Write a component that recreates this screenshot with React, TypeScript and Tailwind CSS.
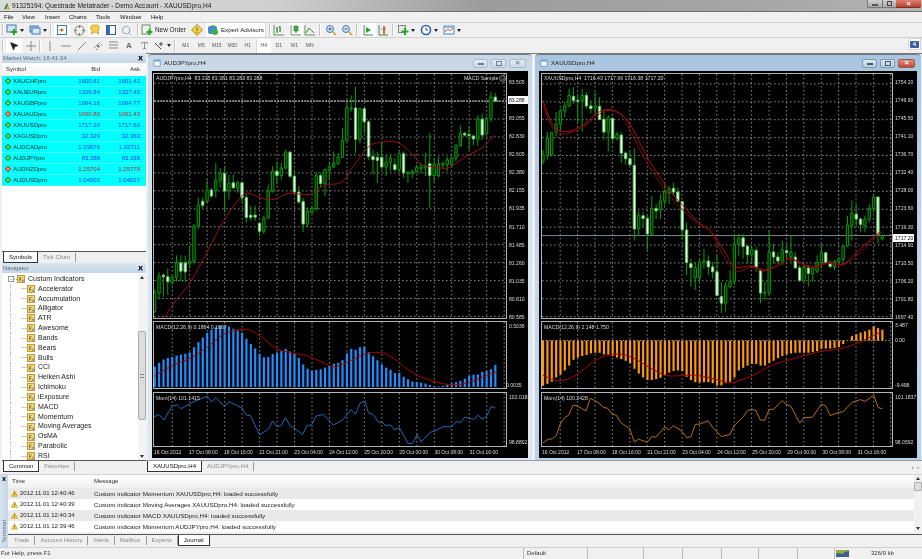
import type { ReactNode } from "react";
import { Crosshair, MousePointer2, Search, Type } from "lucide-react";

type Candle = [number, number, number, number, number];
type Pt = [number, number];

const audCandles: Candle[] = [
  [705,775,712,770,0],[650,730,663,715,0],[655,725,660,665,1],[640,720,665,680,1],[660,690,668,682,0],[600,680,623,668,0],[600,680,623,648,1],[600,680,623,650,1],[570,640,617,625,0],[505,625,512,618,0],
  [425,520,448,512,0],[425,460,436,448,1],[370,440,403,436,0],[395,425,402,420,1],[320,425,372,403,0],[335,395,352,372,0],[330,470,352,405,1],[355,430,380,405,0],[355,400,380,395,1],[375,410,380,397,0],
  [375,440,380,425,1],[415,500,425,485,1],[450,495,478,485,1],[450,495,478,484,1],[500,540,503,527,1],[480,535,487,527,0],[385,490,405,487,0],[330,410,345,405,0],[315,385,345,358,1],[320,370,335,358,0],
  [280,340,287,335,0],[285,365,287,360,1],[340,415,360,408,1],[390,445,408,438,1],[425,530,437,505,1],[455,515,467,505,0],[450,470,458,470,0],[348,465,358,458,0],[350,395,358,382,1],[340,420,340,382,0],
  [315,370,332,342,0],[285,335,320,332,0],[290,325,303,322,0],[215,305,252,303,0],[140,255,153,253,0],[115,165,153,155,0],[88,290,153,248,1],[155,260,155,248,0],[155,230,155,195,1],[190,310,195,300,1],
  [280,355,300,310,1],[285,380,303,312,1],[255,340,303,332,1],[295,360,318,332,0],[295,345,305,318,0],[305,345,325,340,1],[285,345,292,340,0],[285,365,292,350,1],[345,380,348,352,0],[340,365,345,352,0],
  [325,350,333,345,0],[320,350,332,338,0],[290,360,330,335,0],[228,455,322,358,1],[305,380,325,358,0],[300,365,322,358,0],[315,335,322,325,0],[300,345,310,325,0],[300,335,305,325,0],[262,315,268,305,0],
  [205,270,230,268,0],[225,240,230,235,1],[210,280,233,237,1],[235,265,238,247,1],[175,268,187,247,0],[170,250,187,235,1],[180,235,185,232,0],[103,195,120,185,0],[108,135,120,132,1],
];

const xauCandles: Candle[] = [
  [280,325,295,315,0],[225,310,245,298,0],[225,300,228,295,0],[165,240,202,225,0],[155,220,162,202,0],[135,180,147,162,0],[95,150,115,147,0],[90,140,118,130,1],[115,200,130,133,1],[95,225,115,130,0],
  [105,155,115,147,1],[130,170,147,155,1],[105,175,147,155,0],[120,185,148,188,1],[160,250,187,226,1],[175,285,183,226,0],[180,260,185,245,1],[225,250,233,246,0],[225,320,235,290,1],[285,325,290,307,1],
  [285,330,307,325,1],[275,555,327,520,1],[465,540,478,520,0],[470,515,480,488,1],[475,590,488,535,1],[420,540,458,535,0],[445,490,458,465,1],[415,490,435,463,0],[385,450,407,435,0],[390,445,397,410,0],
  [380,420,397,408,1],[395,440,408,435,1],[435,550,437,522,1],[500,660,523,622,1],[610,695,625,637,1],[620,705,637,668,0],[610,680,620,668,0],[580,640,617,620,0],[600,660,617,635,1],[620,670,635,650,1],
  [600,725,650,722,1],[680,775,725,745,1],[680,770,693,745,0],[645,700,680,695,0],[535,690,567,680,0],[535,600,548,567,0],[535,610,547,573,1],[570,625,572,598,1],[575,625,583,597,0],[575,650,585,635,1],
  [640,745,645,714,1],[680,735,712,714,0],[525,720,590,714,0],[565,625,590,605,1],[590,625,605,617,1],[555,630,583,620,0],[565,610,586,592,1],[540,620,590,605,0],[590,640,605,638,1],[630,680,638,676,1],
  [630,680,636,676,0],[630,695,638,655,1],[635,680,640,655,0],[600,655,622,648,0],[565,640,592,622,0],[590,625,592,622,1],[615,640,625,634,1],[615,645,618,634,0],[605,625,610,620,0],[570,620,572,612,0],
  [480,575,508,572,0],[433,555,472,510,0],[445,510,475,490,1],[485,530,490,506,1],[480,530,490,510,0],[445,500,458,490,0],[420,470,423,458,0],[423,565,423,538,1],[535,555,540,550,0],
];

const audMacd = [152,140,130,125,122,118,115,112,108,92,76,62,47,38,30,27,26,28,35,40,48,66,82,96,112,123,122,113,108,104,97,105,112,125,145,158,165,162,160,155,150,143,140,132,111,97,100,92,90,107,120,132,145,155,162,172,171,183,191,198,199,202,204,209,212,213,212,208,204,200,196,189,180,177,176,168,166,160,147];
const xauMacd = [213,207,200,187,178,165,150,132,125,120,117,112,110,110,115,118,120,125,130,135,143,160,175,187,195,195,192,188,180,172,167,165,167,185,195,202,203,202,202,205,212,212,205,200,187,165,157,150,145,145,150,150,142,135,127,120,115,112,110,110,110,110,108,105,98,97,97,95,92,83,72,58,52,47,43,38,27,33,38];

const audMa: Pt[] = [[40,790],[70,745],[120,680],[170,590],[220,495],[270,425],[295,412],[345,430],[380,428],[415,412],[480,415],[520,388],[575,378],[610,330],[655,272],[690,258],[745,258],[790,295],[815,325],[860,332],[895,335],[950,300],[1000,272],[1035,235]];
const xauMaA: Pt[] = [[20,130],[50,205],[90,225],[140,205],[190,165],[225,158],[260,175],[285,205],[340,310],[400,400],[440,445],[490,500],[530,530],[570,590],[600,635],[650,632],[690,645],[740,625],[770,610],[830,635],[880,622],[930,625],[980,580],[1030,535],[1045,530]];
const xauMaB: Pt[] = [[20,145],[50,215],[85,232],[140,212],[190,172],[225,160],[260,178],[280,215],[335,320],[395,410],[440,460],[490,505],[525,525],[565,600],[605,648],[650,636],[690,648],[740,625],[770,612],[830,638],[880,625],[930,628],[980,590],[1030,540],[1045,530]];
const audSignal: Pt[] = [[10,182],[60,152],[120,125],[170,92],[220,52],[270,37],[300,40],[340,65],[380,97],[430,110],[470,118],[510,135],[550,152],[590,140],[640,115],[690,108],[730,125],[790,172],[850,197],[910,208],[960,200],[1040,168]];
const xauSignal: Pt[] = [[20,180],[55,195],[85,195],[120,180],[170,140],[210,118],[260,115],[300,130],[340,155],[390,180],[430,182],[480,180],[530,190],[580,203],[610,198],[660,178],[710,150],[780,128],[850,108],[920,97],[970,80],[1040,45]];
const audMom: Pt[] = [[10,302],[25,295],[40,312],[65,268],[80,265],[92,277],[130,255],[170,238],[183,255],[197,243],[222,270],[237,255],[275,275],[288,297],[300,298],[328,358],[355,340],[367,315],[380,332],[393,330],[406,304],[420,330],[435,340],[458,357],[470,330],[485,327],[498,300],[520,295],[550,328],[578,312],[603,280],[617,294],[630,260],[645,253],[656,290],[670,295],[685,318],[697,320],[710,330],[722,327],[735,343],[748,335],[775,385],[788,385],[802,358],[815,380],[842,350],[855,347],[880,333],[907,333],[920,317],[933,320],[946,303],[972,310],[985,297],[999,310],[1012,300],[1025,270],[1038,275]];
const xauMom: Pt[] = [[20,385],[35,374],[48,372],[60,362],[72,325],[85,305],[98,296],[111,265],[124,267],[150,283],[163,243],[176,250],[189,258],[203,272],[216,275],[229,293],[242,297],[255,320],[282,340],[296,382],[309,373],[335,383],[350,365],[361,367],[388,335],[401,343],[414,330],[440,348],[454,368],[467,366],[480,326],[493,325],[519,315],[533,335],[559,365],[585,358],[598,330],[624,303],[638,283],[651,277],[664,283],[677,312],[690,313],[704,278],[717,278],[743,250],[756,263],[769,268],[796,322],[809,305],[835,303],[862,261],[875,268],[888,298],[914,288],[928,285],[954,256],[980,247],[993,253],[1020,233],[1033,272],[1046,277]];

const dates = ["16 Oct 2012", "17 Oct 08:00", "18 Oct 16:00", "21 Oct 21:00", "23 Oct 04:00", "24 Oct 12:00", "25 Oct 20:00", "29 Oct 00:00", "30 Oct 08:00", "31 Oct 16:00"];

const quotes = [
  ["XAUCHFpro", "1600.81", "1601.42", 0],
  ["XAUEURpro", "1326.84", "1327.45", 0],
  ["XAUGBPpro", "1064.16", "1064.77", 0],
  ["XAUAUDpro", "1650.80", "1651.43", 1],
  ["XAUUSDpro", "1717.20", "1717.60", 0],
  ["XAGUSDpro", "32.329", "32.363", 0],
  ["AUDCADpro", "1.03676", "1.03711", 0],
  ["AUDJPYpro", "83.288", "83.338", 0],
  ["AUDNZDpro", "1.25704", "1.25778", 1],
  ["AUDUSDpro", "1.04002", "1.04027", 0],
] as const;

const indicators = ["Accelerator", "Accumulation", "Alligator", "ATR", "Awesome", "Bands", "Bears", "Bulls", "CCI", "Heiken Ashi", "Ichimoku", "iExposure", "MACD", "Momentum", "Moving Averages", "OsMA", "Parabolic", "RSI"];

const journal = [
  ["2012.11.01 12:40:46", "Custom indicator Momentum XAUUSDpro,H4: loaded successfully"],
  ["2012.11.01 12:40:39", "Custom indicator Moving Averages XAUUSDpro,H4: loaded successfully"],
  ["2012.11.01 12:40:34", "Custom indicator MACD XAUUSDpro,H4: loaded successfully"],
  ["2012.11.01 12:39:46", "Custom indicator Momentum AUDJPYpro,H4: loaded successfully"],
];

// catmull-rom through the sampled points, so the averages don't look like polylines
const smooth = (pts: Pt[]) => {
  let d = `M${pts[0][0]} ${pts[0][1]}`;
  for (let i = 0; i < pts.length - 1; i++) {
    const p0 = pts[Math.max(i - 1, 0)];
    const p1 = pts[i];
    const p2 = pts[i + 1];
    const p3 = pts[Math.min(i + 2, pts.length - 1)];
    d += ` C${p1[0] + (p2[0] - p0[0]) / 6} ${p1[1] + (p2[1] - p0[1]) / 6} ${p2[0] - (p3[0] - p1[0]) / 6} ${p2[1] - (p3[1] - p1[1]) / 6} ${p2[0]} ${p2[1]}`;
  }
  return d;
};

const Curve = ({ pts, color, straight }: { pts: Pt[]; color: string; straight?: boolean }) => (
  <path
    d={straight ? "M" + pts.map((p) => p.join(" ")).join(" L") : smooth(pts)}
    fill="none"
    stroke={color}
    strokeWidth={1}
    vectorEffect="non-scaling-stroke"
  />
);

const Grid = ({ x0, ys, top, bottom, left, right }: { x0: number; ys: number[]; top: number; bottom: number; left: number; right: number }) => (
  <g stroke="#8c8c8c" strokeWidth={1} strokeDasharray="1.5 2.5">
    {Array.from({ length: 20 }, (_, i) => (
      <line key={i} x1={x0 + i * 52.6} x2={x0 + i * 52.6} y1={top} y2={bottom} vectorEffect="non-scaling-stroke" />
    ))}
    {ys.map((y) => (
      <line key={y} x1={left} x2={right} y1={y} y2={y} vectorEffect="non-scaling-stroke" />
    ))}
  </g>
);

const Candles = ({ data, x0 }: { data: Candle[]; x0: number }) => (
  <g>
    {data.map(([hi, lo, top, bot, white], i) => {
      const x = x0 + i * 13.15;
      return (
        <g key={i}>
          <line x1={x} x2={x} y1={hi} y2={lo} stroke="#00a000" strokeWidth={1} vectorEffect="non-scaling-stroke" />
          <rect
            x={x - 3.5}
            y={top}
            width={7}
            height={Math.max(bot - top, 3)}
            fill={white ? "#ffffff" : "#001800"}
            stroke={white ? "#58c858" : "#00a000"}
            strokeWidth={1}
            vectorEffect="non-scaling-stroke"
          />
        </g>
      );
    })}
  </g>
);

const Plot = ({ viewBox, className, children }: { viewBox: string; className: string; children: ReactNode }) => (
  <svg viewBox={viewBox} preserveAspectRatio="none" className={`block shrink-0 border border-[#b4b4b4] bg-black ${className}`}>
    {children}
  </svg>
);

const Axis = ({ children, className = "" }: { children: ReactNode; className?: string }) => (
  <div className={`flex flex-col pl-[2px] text-[5.1px] leading-[8px] text-[#dcdcdc] whitespace-nowrap ${className}`}>{children}</div>
);

const IndicatorText = ({ children }: { children: ReactNode }) => (
  <span className="absolute left-[3px] top-[2px] text-[5.2px] leading-[8px] text-[#d8d8d8] whitespace-nowrap">{children}</span>
);

const WinBtn = ({ kind, active }: { kind: "min" | "max" | "close"; active?: boolean }) => (
  <span
    className={`flex h-[9px] items-center justify-center rounded-[2px] border ${
      kind === "close" ? "w-[17px]" : "w-[15px]"
    } ${
      kind === "close" && active
        ? "border-[#9a5a50] bg-[linear-gradient(#e09080,#c04a38)] text-white"
        : active
          ? "border-[#7f97ad] bg-[linear-gradient(#dce8f2,#b6cbdd)] text-[#44596b]"
          : "border-[#a9bccd] bg-[linear-gradient(#e2ebf3,#c9d9e7)] text-[#6f8293]"
    }`}
  >
    {kind === "min" && <span className="mt-[2px] h-[2px] w-[6px] border border-current" />}
    {kind === "max" && <span className="h-[5px] w-[6px] border border-current" />}
    {kind === "close" && <span className="text-[8px] leading-[8px] font-bold">×</span>}
  </span>
);

const ChartWindow = ({ title, active, className, children }: { title: string; active?: boolean; className: string; children: ReactNode }) => (
  <div
    className={`flex flex-col rounded-t-[4px] border-t border-[#6d7f90] px-[4px] pb-[3px] ${
      active ? "bg-[linear-gradient(#a9c5e0,#c2d8ec_60%,#b6d3ec)]" : "bg-[linear-gradient(#c9d8e7,#d9e5f0_60%,#dde7f1)]"
    } ${className}`}
  >
    <div className="flex h-[16px] shrink-0 items-center">
      <svg viewBox="0 0 10 10" className="ml-[1px] h-[8px] w-[8px]">
        <rect x="1" y="1" width="8" height="8" rx="1" fill="#fff" stroke="#5b8fc4" />
        <rect x="1" y="1" width="8" height="2.5" fill="#7fb0dd" />
      </svg>
      <span className="ml-[3px] text-[6.1px] text-[#222]">{title}</span>
      <div className="ml-auto flex gap-[3px] pr-[2px]">
        <WinBtn kind="min" active={active} />
        <WinBtn kind="max" active={active} />
        <WinBtn kind="close" active={active} />
      </div>
    </div>
    <div className="flex-1 bg-black">{children}</div>
  </div>
);

const DateRow = ({ left }: { left: string }) => (
  <div className={`flex h-[11px] items-center text-[5px] text-[#dcdcdc] whitespace-nowrap ${left}`}>
    {dates.map((d) => (
      <span key={d} className="w-[35.05px] shrink-0">
        {d}
      </span>
    ))}
  </div>
);

const Ic = ({ children, className = "" }: { children: ReactNode; className?: string }) => (
  <svg viewBox="0 0 12 12" className={`h-[12px] w-[12px] shrink-0 ${className}`}>
    {children}
  </svg>
);

const Caret = () => (
  <svg viewBox="0 0 4 3" className="ml-[2px] h-[3px] w-[4px] shrink-0">
    <path d="M0 0h4L2 3z" fill="#222" />
  </svg>
);

const Sep = ({ className = "" }: { className?: string }) => <span className={`h-[12px] w-[2px] shrink-0 border-r border-l border-r-white border-l-[#c4c4c4] ${className}`} />;

const DocPlus = () => (
  <Ic>
    <rect x="1" y="1" width="9" height="7" fill="#cfe2f5" stroke="#3f78b5" />
    <path d="M8 5v6M5 8h6" stroke="#27a327" strokeWidth="2" />
  </Ic>
);

const CandleIcon = ({ mode }: { mode: number }) => (
  <Ic>
    <path d="M1 1v10h10" fill="none" stroke="#4f6f3f" strokeWidth=".8" />
    {mode === 0 && <path d="M4 3v6M7 2v6M4 4H3M4 7h1M7 3H6M7 6h1" stroke="#1f7a1f" fill="none" />}
    {mode === 1 && (
      <>
        <path d="M6 1v8" stroke="#2e8b2e" />
        <rect x="4" y="2.5" width="4" height="4.5" fill="#3fae3f" stroke="#1f6a1f" strokeWidth=".6" />
      </>
    )}
    {mode === 2 && <path d="M2 9l3-5 2 2 3 3" fill="none" stroke="#2e8b2e" />}
  </Ic>
);

const Tf = ({ label, on }: { label: string; on?: boolean }) => (
  <span className={`flex h-[14px] w-[15.5px] items-center justify-center text-[5px] text-[#555] ${on ? "bg-white border-l border-[#d8d8d8]" : ""}`}>{label}</span>
);

const TabRow = ({ items, active, className = "" }: { items: string[]; active: string; className?: string }) => (
  <div className={`flex items-start text-[6px] ${className}`}>
    {items.map((t) => (
      <span
        key={t}
        className={
          t === active
            ? "flex h-[11px] items-center border-x border-b border-[#333] bg-white px-[5px] text-[#111]"
            : "flex h-[9px] items-center border-r border-[#999] px-[5px] text-[#8a8a8a] mt-[1px]"
        }
      >
        {t}
      </span>
    ))}
  </div>
);

const PanelHead = ({ title }: { title: string }) => (
  <div className="flex h-[10px] items-center bg-[linear-gradient(#dbe6f1,#c5d6e7)] pl-[1px] pr-[3px] text-[6px] text-[#5d6a78]">
    {title}
    <span className="ml-auto h-[5px] w-[5px] bg-[#222] [clip-path:polygon(0_0,30%_0,50%_30%,70%_0,100%_0,70%_50%,100%_100%,70%_100%,50%_70%,30%_100%,0_100%,30%_50%)]" />
  </div>
);

const Diamond = ({ up }: { up: boolean }) => (
  <svg viewBox="0 0 8 8" className="ml-[3px] h-[6px] w-[6px] shrink-0">
    <path d="M4 0l4 4-4 4-4-4z" fill={up ? "#2ba82b" : "#e0562a"} stroke={up ? "#176617" : "#8f3316"} strokeWidth=".6" />
    <circle cx="4" cy="4" r="1.2" fill={up ? "#c8f090" : "#ffc090"} />
  </svg>
);

const FolderIcon = ({ className = "" }: { className?: string }) => (
  <svg viewBox="0 0 9 9" className={`h-[8px] w-[8px] shrink-0 ${className}`}>
    <rect x=".5" y=".5" width="8" height="8" fill="#f6d76f" stroke="#b9922c" />
    <path d="M3 7V3h2M3 5h1.5" fill="none" stroke="#6d6340" strokeWidth=".9" />
    <circle cx="6.5" cy="6.5" r="1.4" fill="#9b9b9b" />
  </svg>
);

const Warn = () => (
  <svg viewBox="0 0 10 9" className="h-[7px] w-[7px] shrink-0">
    <path d="M5 .5l4.5 8h-9z" fill="#f3cf3a" stroke="#a78a16" strokeWidth=".7" />
    <path d="M5 3v3M5 7v.6" stroke="#5a4a08" strokeWidth=".9" />
  </svg>
);

const ScrollArrow = ({ up }: { up?: boolean }) => (
  <span className="flex h-[7px] w-full items-center justify-center">
    <span className={`h-0 w-0 border-x-[2px] border-x-transparent ${up ? "border-b-[3px] border-b-[#333]" : "border-t-[3px] border-t-[#333]"}`} />
  </span>
);

export default function App() {
  return (
    <div className="flex h-[559px] w-[922px] flex-col overflow-hidden bg-[#f0f0f0] font-['Liberation_Sans',sans-serif] text-[6px] text-[#222] blur-[0.3px]">
      {/* title bar */}
      <div className="flex h-[12px] shrink-0 items-center border-b border-[#6e6e6e] bg-[linear-gradient(90deg,#dadada,#cfcfcf_30%,#9c9c9c_52%,#a5a5a5_80%,#b4b4b4)] pl-[3px]">
        <svg viewBox="0 0 10 10" className="h-[8px] w-[8px]">
          <path d="M1 9L5 1l1.5 3L4 9z" fill="#4a8f2a" />
          <path d="M5 9l2-3 2 3z" fill="#c9a02a" />
        </svg>
        <span className="ml-[1px] text-[6.6px] text-[#1a1a1a]">91325194: Questrade Metatrader - Demo Account - XAUUSDpro,H4</span>
        <div className="ml-auto flex items-start self-start">
          <span className="flex h-[8px] w-[15px] items-center justify-center rounded-bl-[2px] border-b border-l border-[#777] bg-[linear-gradient(#cfcfcf,#aaa)]">
            <span className="mt-[2px] h-[2px] w-[6px] border border-[#555] bg-white" />
          </span>
          <span className="flex h-[8px] w-[14px] items-center justify-center border-b border-l border-[#777] bg-[linear-gradient(#cfcfcf,#aaa)]">
            <span className="h-[5px] w-[5px] border border-[#444]" />
          </span>
          <span className="mr-[1px] flex h-[8px] w-[25px] items-center justify-center rounded-br-[2px] border-b border-[#7a3028] bg-[linear-gradient(#e08070,#b8402e)] text-[8px] leading-[7px] font-bold text-white">×</span>
        </div>
      </div>

      {/* menu */}
      <div className="flex h-[11px] shrink-0 items-center border-b border-[#d0d0d0] pl-[4px] text-[6px] text-[#111]">
        <span className="w-[18px]">File</span>
        <span className="w-[23px]">View</span>
        <span className="w-[24px]">Insert</span>
        <span className="w-[27px]">Charts</span>
        <span className="w-[24px]">Tools</span>
        <span className="w-[31px]">Window</span>
        <span>Help</span>
      </div>

      {/* standard toolbar */}
      <div className="flex h-[15px] shrink-0 items-center border-b border-[#d0d0d0] pl-[2px]">
        <Sep />
        <span className="ml-[2px]"><DocPlus /></span>
        <Caret />
        <span className="ml-[5px] flex items-center">
          <Ic>
            <rect x="1" y="2" width="8" height="6" fill="#b5d0ee" stroke="#3f78b5" />
            <rect x="3" y="4" width="8" height="6" fill="#d7e7f7" stroke="#3f78b5" />
          </Ic>
          <Caret />
        </span>
        <Sep className="ml-[3px]" />
        <span className="ml-[2px] flex h-[14px] w-[16px] items-center justify-center bg-white">
          <Ic>
            <rect x="1.5" y="1.5" width="9" height="9" fill="#fff" stroke="#3f78b5" />
            <path d="M5 4l3 2-3 2z" fill="#e0562a" />
            <path d="M3 6h2" stroke="#2ba82b" />
          </Ic>
        </span>
        <span className="ml-[3px] flex w-[12px] justify-center">
          <Crosshair className="h-[11px] w-[11px] text-[#6d6d6d]" strokeWidth={2} />
        </span>
        <span className="ml-[3px] flex h-[14px] w-[14px] items-center justify-center bg-white">
          <Ic>
            <path d="M3 1h6l2 3-2 2 1 4-4-2-4 2 1-4-2-2z" fill="#f4cf4f" stroke="#b9922c" strokeWidth=".7" />
          </Ic>
        </span>
        <span className="ml-[1px] flex h-[14px] w-[15px] items-center justify-center bg-white">
          <Ic>
            <rect x="1.5" y="1.5" width="9" height="9" fill="#fff" stroke="#35598c" />
            <rect x="2" y="2" width="3" height="8" fill="#2f6fbf" />
          </Ic>
        </span>
        <span className="ml-[1px] flex h-[14px] w-[15px] items-center justify-center">
          <Search className="h-[11px] w-[11px] text-[#7a8ea6]" strokeWidth={1.6} />
        </span>
        <Sep className="ml-[3px]" />
        <span className="ml-[2px] flex h-[14px] items-center">
          <Ic>
            <rect x="1" y="1" width="8" height="9" fill="#eef3ee" stroke="#6d8a6d" />
            <path d="M8.5 5v6M5.5 8h6" stroke="#2ba82b" strokeWidth="2" />
          </Ic>
          <span className="ml-[2px] text-[6.4px] text-[#222]">New Order</span>
        </span>
        <span className="ml-[5px]">
          <Ic>
            <path d="M6 .5L11.5 6 6 11.5.5 6z" fill="#f4cf4f" stroke="#b68a14" />
            <path d="M6 3.5v3.5M6 8v1" stroke="#8a6a10" strokeWidth="1.2" />
          </Ic>
        </span>
        <span className="ml-[3px] flex h-[14px] w-[60px] items-center border-r border-[#dcdcdc] bg-white pl-[1px]">
          <Ic>
            <rect x="1" y="2" width="9" height="8" rx="2" fill="#3f8fd0" />
            <circle cx="8" cy="8" r="3" fill="#3fae3f" />
            <path d="M3 2l3-1.500 3 1.500" fill="#e8b93a" />
          </Ic>
          <span className="ml-[2px] text-[6.2px] text-[#222] whitespace-nowrap">Expert Advisors</span>
        </span>
        <Sep className="ml-[3px]" />
        <span className="ml-[2px]"><CandleIcon mode={0} /></span>
        <span className="ml-[4px] flex h-[14px] w-[14px] items-center justify-center bg-white"><CandleIcon mode={1} /></span>
        <span className="ml-[1px]"><CandleIcon mode={2} /></span>
        <Sep className="ml-[3px]" />
        <span className="ml-[4px]">
          <Ic>
            <circle cx="5" cy="5" r="3.500" fill="#cfe2f5" stroke="#3f78b5" />
            <path d="M3.500 5h3M5 3.500v3" stroke="#2f5f9f" />
            <path d="M8 8l3 3" stroke="#c99a2a" strokeWidth="1.600" />
          </Ic>
        </span>
        <span className="ml-[4px]">
          <Ic>
            <circle cx="5" cy="5" r="3.500" fill="#cfe2f5" stroke="#3f78b5" />
            <path d="M3.500 5h3" stroke="#2f5f9f" />
            <path d="M8 8l3 3" stroke="#c99a2a" strokeWidth="1.600" />
          </Ic>
        </span>
        <Sep className="ml-[3px]" />
        <span className="ml-[3px] flex h-[14px] w-[15px] items-center justify-center bg-white">
          <Ic>
            <path d="M2 1v10h9" fill="none" stroke="#3f6f3f" strokeWidth=".9" />
            <path d="M4 3l5 3-5 3z" fill="#2ba82b" />
          </Ic>
        </span>
        <span className="ml-[1px]">
          <Ic>
            <path d="M2 1v10h9" fill="none" stroke="#3f6f3f" strokeWidth=".9" />
            <path d="M7 2v8" stroke="#c0442a" strokeWidth="1.500" />
            <path d="M4 5h6" stroke="#3f6f3f" strokeDasharray="1 1" />
          </Ic>
        </span>
        <Sep className="ml-[3px]" />
        <span className="ml-[3px] flex items-center">
          <Ic>
            <rect x="1.500" y="1.500" width="7" height="7" fill="#e6e6e6" stroke="#7a8a7a" />
            <path d="M8 4v7M4.500 7.500h7" stroke="#2ba82b" strokeWidth="2" />
          </Ic>
          <Caret />
        </span>
        <span className="ml-[5px] flex items-center">
          <Ic>
            <circle cx="6" cy="6" r="4.500" fill="#fff" stroke="#2a63b5" strokeWidth="1.600" />
            <path d="M6 3.500V6h2" fill="none" stroke="#2a4a85" />
          </Ic>
          <Caret />
        </span>
        <span className="ml-[5px] flex items-center">
          <Ic>
            <rect x="1" y="2" width="10" height="8" fill="#f0f6ff" stroke="#5a82b0" />
            <path d="M2 8l3-3 2 2 3-3" fill="none" stroke="#d0682a" />
            <rect x="1.500" y="2.500" width="9" height="1.500" fill="#8fb6dd" />
          </Ic>
          <Caret />
        </span>
      </div>

      {/* line studies + timeframes */}
      <div className="relative flex h-[15px] shrink-0 items-center pl-[2px]">
        <Sep />
        <span className="ml-[2px] flex h-[14px] w-[16px] items-center justify-center bg-white">
          <MousePointer2 className="h-[10px] w-[10px] fill-[#222] text-[#222]" />
        </span>
        <span className="ml-[1px] flex w-[15px] justify-center">
          <Ic><path d="M6 1v10M1 6h10" stroke="#888" /></Ic>
        </span>
        <Sep className="ml-[1px]" />
        <span className="ml-[3px]"><Ic><path d="M6 1v10" stroke="#888" /></Ic></span>
        <span className="ml-[4px]"><Ic><path d="M1 6h10" stroke="#888" /></Ic></span>
        <span className="ml-[4px]"><Ic><path d="M2 10l8-8" stroke="#888" /></Ic></span>
        <span className="ml-[4px]"><Ic><path d="M2 8l6-6M4 10l6-6" stroke="#777" strokeDasharray="1.500 .7" /><circle cx="6" cy="6" r="1" fill="#555" /></Ic></span>
        <span className="ml-[4px]"><Ic><path d="M1 2h9M1 5h9M1 8h9" stroke="#888" /></Ic></span>
        <span className="ml-[3px] w-[12px] text-center text-[8px] font-bold text-[#666]">A</span>
        <span className="ml-[3px] flex w-[12px] justify-center"><Type className="h-[9px] w-[9px] text-[#777]" /></span>
        <span className="ml-[3px] flex items-center">
          <Ic><path d="M2 3l3 3M8 9l-3-3M8 2v4M6 4h4" stroke="#444" fill="none" /></Ic>
          <Caret />
        </span>
        <Sep className="ml-[3px]" />
        <span className="ml-[2px] flex items-center">
          <Tf label="M1" />
          <Tf label="M5" />
          <Tf label="M15" />
          <Tf label="M30" />
          <Tf label="H1" />
          <Tf label="H4" on />
          <Tf label="D1" />
          <Tf label="W1" />
          <Tf label="MN" />
        </span>
        <span className="absolute right-[1px] top-0 flex h-[12px] w-[13px] items-center justify-center border border-[#d8d8d8] bg-[#f8f8f8]">
          <span className="flex h-[7px] w-[9px] items-center justify-center rounded-[1px] bg-[#3b5f9f] text-[6px] font-bold text-white">4</span>
        </span>
      </div>

      {/* workspace */}
      <div className="flex h-[421px] shrink-0">
        <div className="flex w-[146px] shrink-0 flex-col">
          <div className="flex h-[210px] flex-col pl-[2px]">
            <PanelHead title="Market Watch: 16:41:34" />
            <div className="flex-1 bg-white">
              <div className="flex h-[13px] items-center bg-[linear-gradient(#fff,#f1f1f1)] text-[#333]">
                <span className="w-[60px] pl-[4px]">Symbol</span>
                <span className="w-[39px] pr-[1px] text-right">Bid</span>
                <span className="w-[41px] pr-[2px] text-right">Ask</span>
              </div>
              {quotes.map(([sym, bid, ask, down]) => (
                <div key={sym} className="flex h-[11px] items-center border-b border-[#3dfcfc] bg-[#00ffff]">
                  <span className="flex w-[60px] items-center">
                    <Diamond up={!down} />
                    <span className="ml-[2px] text-[#062828]">{sym}</span>
                  </span>
                  <span className={`w-[39px] pr-[1px] text-right ${down ? "text-[#c02a2a]" : "text-[#0a3cf0]"}`}>{bid}</span>
                  <span className={`w-[41px] pr-[2px] text-right ${down ? "text-[#c02a2a]" : "text-[#0a3cf0]"}`}>{ask}</span>
                </div>
              ))}
            </div>
            <div className="h-[12px] border-t border-[#555]">
              <TabRow items={["Symbols", "Tick Chart"]} active="Symbols" className="pl-[1px]" />
            </div>
          </div>
          <div className="flex h-[211px] flex-col pl-[2px]">
            <PanelHead title="Navigator" />
            <div className="flex h-[187px] bg-white pt-[1px]">
              <div className="flex-1 overflow-hidden pl-[6px]">
                <div className="flex h-[10px] items-center">
                  <span className="flex h-[6px] w-[6px] items-center justify-center border border-[#999] text-[6px] leading-[4px] text-[#555]">-</span>
                  <span className="w-[3px] border-t border-dotted border-[#999]" />
                  <FolderIcon />
                  <span className="ml-[3px] text-[7px]">Custom Indicators</span>
                </div>
                {indicators.map((name) => (
                  <div key={name} className="flex h-[9.85px] items-center">
                    <span className="ml-[2px] h-full w-[11px] border-l border-dotted border-[#bbb]" />
                    <span className="w-[6px] border-t border-[#ccc]" />
                    <FolderIcon />
                    <span className="ml-[3px] text-[7px]">{name}</span>
                  </div>
                ))}
              </div>
              <div className="flex w-[8px] shrink-0 flex-col bg-[#f4f4f4]">
                <ScrollArrow up />
                <div className="mt-[50px] flex h-[89px] items-center justify-center rounded-[2px] border border-[#aaa] bg-[#dcdcdc]">
                  <span className="h-[4px] w-[4px] border-y border-[#888]" />
                </div>
                <div className="flex-1" />
                <ScrollArrow />
              </div>
            </div>
            <div className="h-[12px] border-t border-[#555]">
              <TabRow items={["Common", "Favorites"]} active="Common" className="pl-[1px]" />
            </div>
          </div>
        </div>

        <div className="flex flex-1 flex-col">
          <div className="flex h-[407px] gap-[3px] border-t border-[#777] pl-[2px]">
            <ChartWindow title="AUDJPYpro,H4" className="w-[384px]">
              <div className="flex flex-col pt-[2px] pl-[1px]">
                <div className="relative flex h-[246px]">
                  <Plot viewBox="10 50 1060 740" className="h-[246px] w-[354px]">
                    <Grid x0={65} ys={Array.from({ length: 14 }, (_, i) => 78 + i * 54.4)} top={50} bottom={790} left={10} right={1070} />
                    <line x1={10} x2={1070} y1={132} y2={132} stroke="#cfcfcf" strokeDasharray="2 1" vectorEffect="non-scaling-stroke" />
                    <Candles data={audCandles} x0={12} />
                    <Curve pts={audMa} color="#9c1010" />
                  </Plot>
                  <span className="absolute left-[3px] top-[1px] text-[5.2px] leading-[8px] text-[#d8d8d8] whitespace-nowrap">AUDJPYpro,H4 &nbsp;83.335 83.381 83.283 83.288</span>
                  <span className="absolute left-[311px] top-[1px] flex items-center gap-[1px] text-[5.2px] leading-[8px] text-[#d8d8d8] whitespace-nowrap">
                    MACD Sample
                    <svg viewBox="0 0 8 8" className="h-[7px] w-[7px]">
                      <circle cx="4" cy="4" r="3.300" fill="none" stroke="#aaa" />
                      <path d="M2.500 4.500q1.500 1.500 3 0M3 2.800h.5M4.800 2.800h.5" stroke="#aaa" fill="none" strokeWidth=".7" />
                    </svg>
                  </span>
                  <Axis className="h-[248px] justify-between self-start pt-[5px]">
                    <span>83.505</span>
                    <span className="-ml-[1px] w-[20px] bg-white pl-[1px] text-[#111]">83.288</span>
                    <span>83.055</span>
                    <span>82.830</span>
                    <span>82.605</span>
                    <span>82.380</span>
                    <span>82.155</span>
                    <span>81.935</span>
                    <span>81.710</span>
                    <span>81.485</span>
                    <span>81.260</span>
                    <span>81.035</span>
                    <span>80.810</span>
                    <span>80.585</span>
                  </Axis>
                </div>
                <div className="relative mt-[2px] flex h-[68px]">
                  <Plot viewBox="10 14 1060 204" className="h-[68px] w-[354px]">
                    <Grid x0={65} ys={[]} top={14} bottom={218} left={10} right={1070} />
                    {audMacd.map((top, i) => (
                      <rect key={i} x={12 + i * 13.15 - 3} y={top} width={6.500} height={215 - top} fill="#1e90ff" />
                    ))}
                    <Curve pts={audSignal} color="#a80000" />
                  </Plot>
                  <IndicatorText>MACD(12,26,9) 0.1864 0.1867</IndicatorText>
                  <Axis className="h-[68px] justify-between pt-[1px]">
                    <span>0.5036</span>
                    <span className="-ml-[3px]">0.0035</span>
                  </Axis>
                </div>
                <div className="relative mt-[3px] flex h-[55px]">
                  <Plot viewBox="10 228 1060 165" className="h-[55px] w-[354px]">
                    <Grid x0={65} ys={[]} top={228} bottom={393} left={10} right={1070} />
                    <Curve pts={audMom} color="#1f69b8" straight />
                  </Plot>
                  <IndicatorText>Mom(14) 101.1415</IndicatorText>
                  <Axis className="h-[55px] justify-between pt-[1px] pb-[1px]">
                    <span>102.0188</span>
                    <span>98.8802</span>
                  </Axis>
                </div>
                <DateRow left="pl-[1px]" />
              </div>
            </ChartWindow>

            <ChartWindow title="XAUUSDpro,H4" active className="w-[386px]">
              <div className="flex flex-col pt-[2px] pl-[2px]">
                <div className="relative flex h-[246px]">
                  <Plot viewBox="17 50 1058 740" className="h-[246px] w-[352px]">
                    <Grid x0={72} ys={Array.from({ length: 14 }, (_, i) => 80 + i * 54.3)} top={50} bottom={790} left={17} right={1075} />
                    <line x1={17} x2={1075} y1={540} y2={540} stroke="#7b8793" vectorEffect="non-scaling-stroke" />
                    <Candles data={xauCandles} x0={20} />
                    <Curve pts={xauMaA} color="#b01010" />
                    <Curve pts={xauMaB} color="#8c0808" />
                  </Plot>
                  <span className="absolute left-[3px] top-[1px] text-[5.2px] leading-[8px] text-[#d8d8d8] whitespace-nowrap">XAUUSDpro,H4 &nbsp;1716.43 1717.96 1716.38 1717.20</span>
                  <span className="absolute left-[352px] top-[161px] w-[21px] bg-white pl-[2px] text-[5.1px] leading-[8px] text-[#111]">1717.20</span>
                  <Axis className="h-[248px] justify-between self-start pt-[5px]">
                    <span>1754.20</span>
                    <span>1749.90</span>
                    <span>1745.50</span>
                    <span>1741.10</span>
                    <span>1736.70</span>
                    <span>1732.40</span>
                    <span>1728.00</span>
                    <span>1723.60</span>
                    <span>1719.30</span>
                    <span>1714.90</span>
                    <span>1710.50</span>
                    <span>1706.20</span>
                    <span>1701.80</span>
                    <span>1697.40</span>
                  </Axis>
                </div>
                <div className="relative mt-[2px] flex h-[68px]">
                  <Plot viewBox="17 14 1058 206" className="h-[68px] w-[352px]">
                    <Grid x0={72} ys={[]} top={14} bottom={220} left={17} right={1075} />
                    <line x1={17} x2={1075} y1={72} y2={72} stroke="#9a9a9a" strokeDasharray="1.500 2" vectorEffect="non-scaling-stroke" />
                    {xauMacd.map((v, i) => (
                      <rect key={i} x={20 + i * 13.15 - 3} y={Math.min(v, 72)} width={6.500} height={Math.abs(v - 72)} fill="#ff9a0a" />
                    ))}
                    <Curve pts={xauSignal} color="#a80000" />
                  </Plot>
                  <IndicatorText>MACD(12,26,9) 2.148 1.750</IndicatorText>
                  <Axis>
                    <span>3.487</span>
                    <span className="mt-[7px]">0.00</span>
                    <span className="mt-[37px]">-9.498</span>
                  </Axis>
                </div>
                <div className="relative mt-[3px] flex h-[55px]">
                  <Plot viewBox="17 226 1058 169" className="h-[55px] w-[352px]">
                    <Grid x0={72} ys={[]} top={226} bottom={395} left={17} right={1075} />
                    <Curve pts={xauMom} color="#b86f12" straight />
                  </Plot>
                  <IndicatorText>Mom(14) 100.2428</IndicatorText>
                  <Axis className="h-[55px] justify-between pt-[1px] pb-[1px]">
                    <span>101.1837</span>
                    <span>98.0592</span>
                  </Axis>
                </div>
                <DateRow left="pl-[1px]" />
              </div>
            </ChartWindow>
          </div>

          <div className="flex h-[14px] items-start border-t border-[#999] pl-[1px]">
            <TabRow items={["XAUUSDpro,H4", "AUDJPYpro,H4"]} active="XAUUSDpro,H4" />
            <span className="ml-auto mr-[3px] mt-[2px] text-[6px] text-[#555]">‹ &nbsp;›</span>
          </div>
        </div>
      </div>

      {/* terminal */}
      <div className="flex h-[73px] shrink-0 border-t border-[#d4d4d4]">
        <div className="flex w-[8px] shrink-0 flex-col items-center bg-[linear-gradient(90deg,#d8e4ef,#c4d6e6)]">
          <span className="mt-[2px] h-[4px] w-[4px] bg-[#222] [clip-path:polygon(0_0,30%_0,50%_30%,70%_0,100%_0,70%_50%,100%_100%,70%_100%,50%_70%,30%_100%,0_100%,30%_50%)]" />
          <span className="mt-auto mb-[4px] rotate-180 text-[6px] text-[#5d7184] [writing-mode:vertical-rl]">Terminal</span>
        </div>
        <div className="flex flex-1 flex-col">
          <div className="flex h-[60px] flex-col border-b border-[#555]">
            <div className="flex">
              <div className="flex-1">
                <div className="flex h-[13px] items-center bg-[linear-gradient(#fff,#f1f1f1)] text-[#333]">
                  <span className="w-[86px] pl-[4px]">Time</span>
                  <span>Message</span>
                </div>
                {journal.map(([time, msg], i) => (
                  <div key={time} className={`flex h-[11px] items-center ${i % 2 === 0 ? "bg-[#e9e9e9]" : "bg-white"}`}>
                    <span className="flex w-[86px] items-center pl-[3px]">
                      <Warn />
                      <span className="ml-[2px]">{time}</span>
                    </span>
                    <span className="text-[6.25px]">{msg}</span>
                  </div>
                ))}
              </div>
              <div className="flex w-[8px] shrink-0 flex-col bg-[#f0f0f0]">
                <ScrollArrow up />
                <div className="h-[9px] rounded-[1px] border border-[#aaa] bg-[#dedede]" />
                <div className="flex-1" />
                <ScrollArrow />
              </div>
            </div>
          </div>
          <TabRow items={["Trade", "Account History", "Alerts", "Mailbox", "Experts", "Journal"]} active="Journal" className="pl-[1px]" />
        </div>
      </div>

      {/* status bar */}
      <div className="flex h-[12px] shrink-0 items-center border-t border-[#cfcfcf] text-[6px] text-[#333]">
        <span className="w-[523px] pl-[1px]">For Help, press F1</span>
        <span className="flex h-full w-[64px] items-center border-l border-[#bbb] pl-[3px]">Default</span>
        <span className="h-full w-[56px] border-l border-[#bbb]" />
        <span className="h-full w-[39px] border-l border-[#bbb]" />
        <span className="h-full w-[39px] border-l border-[#bbb]" />
        <span className="h-full w-[37px] border-l border-[#bbb]" />
        <span className="h-full w-[39px] border-l border-[#bbb]" />
        <span className="h-full w-[37px] border-l border-[#bbb]" />
        <span className="flex h-full w-[37px] items-center border-l border-[#bbb] pl-[1px]">
          <svg viewBox="0 0 13 7" className="h-[7px] w-[13px]">
            <rect width="13" height="7" fill="#3a5f8f" />
            <path d="M0 4l3-1 3 1 3-2 4-1V0H0z" fill="#8fae3a" />
          </svg>
        </span>
        <span>326/0 kb</span>
      </div>
    </div>
  );
}
